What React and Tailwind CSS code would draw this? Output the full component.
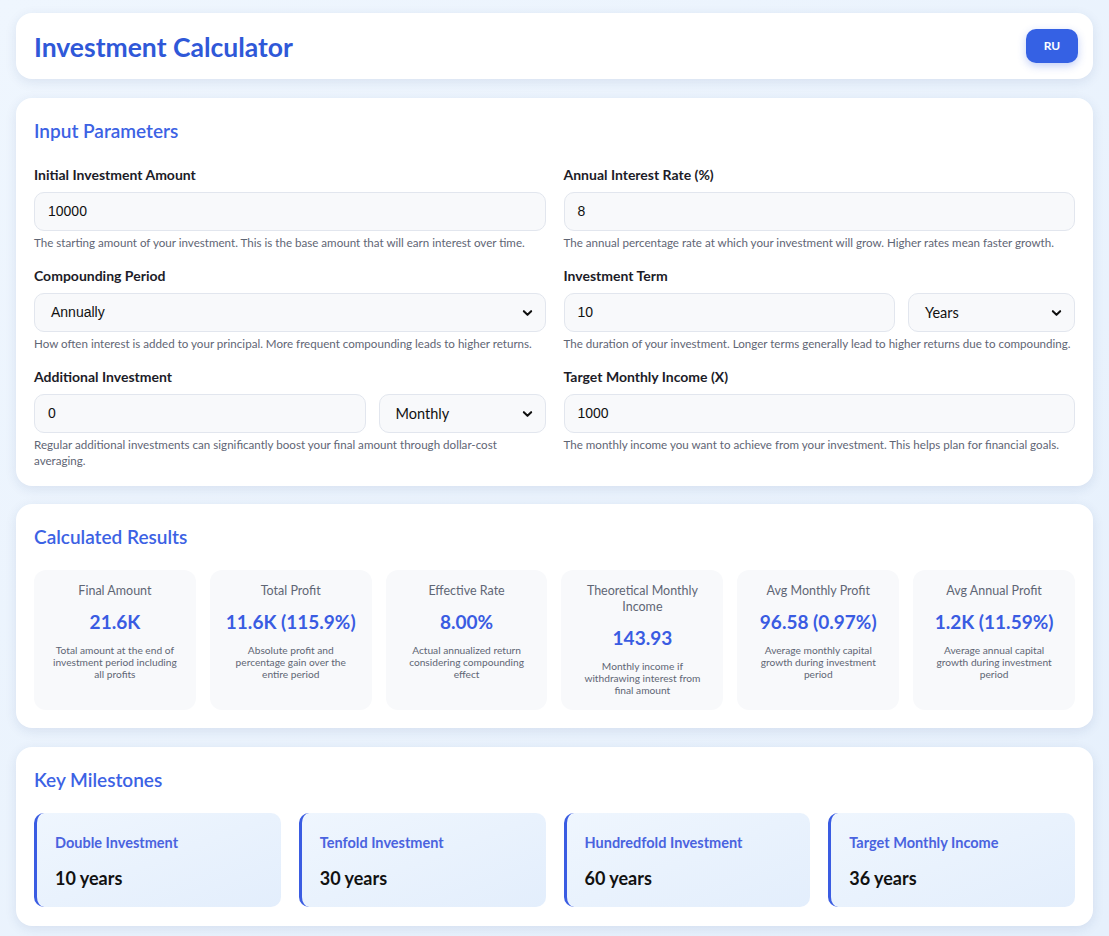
import React from "react";

const font = { fontFamily: 'Lato, "Noto Sans", sans-serif' };

function Chevron() {
  return (
    <svg className="pointer-events-none absolute right-[12px] top-1/2 -translate-y-1/2" width="11" height="11" viewBox="0 0 12 12">
      <path d="M2 4 L6 8 L10 4" fill="none" stroke="#111" strokeWidth="2.2" strokeLinecap="round" strokeLinejoin="round" />
    </svg>
  );
}

function Field({ label, help, children }) {
  return (
    <div className="flex flex-col">
      <div className="text-[14px] leading-[18px] font-bold text-[#1c1c28] mb-[8px]">{label}</div>
      {children}
      <div className="mt-[4px] text-[11.6px] leading-[16px] text-[#5f6675]">{help}</div>
    </div>
  );
}

function TextInput({ value, grow }) {
  return (
    <div className={"h-[39px] min-w-0 rounded-[10px] border border-[#e2e6ee] bg-[#f8f9fb] flex items-center px-[13px] text-[14px] text-[#111] " + (grow ? "flex-1" : "")} style={{ fontFamily: '"Liberation Sans", Arial, sans-serif' }}>
      {value}
    </div>
  );
}

function Select({ value, className = "", arial }) {
  return (
    <div className={"relative h-[39px] shrink-0 rounded-[10px] border border-[#e2e6ee] bg-[#f8f9fb] flex items-center px-[16px] text-[14.5px] text-[#111] " + className} style={arial ? { fontFamily: '"Liberation Sans", Arial, sans-serif', fontSize: "14px" } : undefined}>
      {value}
      <Chevron />
    </div>
  );
}

function Card({ children, className = "" }) {
  return (
    <div className={"bg-white rounded-[16px] shadow-[0_3px_12px_rgba(30,60,120,0.10)] " + className}>{children}</div>
  );
}

function Heading({ children }) {
  return <h2 className="text-[19px] leading-[26px] font-semibold text-[#3c62e4]">{children}</h2>;
}

const results = [
  ["Final Amount", "21.6K", "Total amount at the end of investment period including all profits"],
  ["Total Profit", "11.6K (115.9%)", "Absolute profit and percentage gain over the entire period"],
  ["Effective Rate", "8.00%", "Actual annualized return considering compounding effect"],
  ["Theoretical Monthly Income", "143.93", "Monthly income if withdrawing interest from final amount"],
  ["Avg Monthly Profit", "96.58 (0.97%)", "Average monthly capital growth during investment period"],
  ["Avg Annual Profit", "1.2K (11.59%)", "Average annual capital growth during investment period"],
];

const milestones = [
  ["Double Investment", "10 years"],
  ["Tenfold Investment", "30 years"],
  ["Hundredfold Investment", "60 years"],
  ["Target Monthly Income", "36 years"],
];

export default function App() {
  return (
    <div className="min-h-[936px] bg-gradient-to-br from-[#eff6fe] to-[#e6f0fc] px-[16px] pt-[13px] pb-[11px] flex flex-col gap-[18px]" style={font}>
      <Card className="px-[18px] py-[16px] mb-[1px] flex items-center justify-between">
        <h1 className="text-[26.5px] leading-[31px] pt-[3px] font-bold text-[#2f58d8]">Investment Calculator</h1>
        <button className="w-[52px] h-[34px] mr-[-3px] rounded-[10px] bg-[#3561e4] text-white text-[12px] font-bold shadow-[0_3px_8px_rgba(53,97,228,0.3)]">RU</button>
      </Card>

      <Card className="px-[18px] pt-[20px] pb-[17px]">
        <Heading>Input Parameters</Heading>
        <div className="mt-[22px] grid grid-cols-2 gap-x-[18px] gap-y-[16px]">
          <Field label="Initial Investment Amount" help="The starting amount of your investment. This is the base amount that will earn interest over time.">
            <TextInput value="10000" />
          </Field>
          <Field label="Annual Interest Rate (%)" help="The annual percentage rate at which your investment will grow. Higher rates mean faster growth.">
            <TextInput value="8" />
          </Field>
          <Field label="Compounding Period" help="How often interest is added to your principal. More frequent compounding leads to higher returns.">
            <Select value="Annually" arial />
          </Field>
          <Field label="Investment Term" help="The duration of your investment. Longer terms generally lead to higher returns due to compounding.">
            <div className="flex gap-[13px]">
              <TextInput value="10" grow />
              <Select value="Years" className="w-[167px]" />
            </div>
          </Field>
          <Field label="Additional Investment" help="Regular additional investments can significantly boost your final amount through dollar-cost averaging.">
            <div className="flex gap-[13px]">
              <TextInput value="0" grow />
              <Select value="Monthly" className="w-[167px]" />
            </div>
          </Field>
          <Field label="Target Monthly Income (X)" help="The monthly income you want to achieve from your investment. This helps plan for financial goals.">
            <TextInput value="1000" />
          </Field>
        </div>
      </Card>

      <Card className="px-[18px] pt-[20px] pb-[18px] mb-[1px]">
        <Heading>Calculated Results</Heading>
        <div className="mt-[20px] grid grid-cols-6 gap-[14px]">
          {results.map(([t, v, d]) => (
            <div key={t} className="rounded-[12px] bg-[#f8f9fb] px-[14px] pt-[13px] pb-[14px] text-center">
              <div className="text-[12.5px] leading-[16px] text-[#5f6675]">{t}</div>
              <div className="mt-[11px] text-[19px] leading-[24px] font-bold text-[#3a5ce2]">{v}</div>
              <div className="mt-[10px] px-[1px] text-[10.2px] leading-[12px] text-[#5f6675]">{d}</div>
            </div>
          ))}
        </div>
      </Card>

      <Card className="px-[18px] pt-[20px] pb-[19px]">
        <Heading>Key Milestones</Heading>
        <div className="mt-[20px] grid grid-cols-4 gap-[18px]">
          {milestones.map(([t, v]) => (
            <div key={t} className="rounded-[10px] border-l-[3px] border-[#3a5ce2] bg-gradient-to-br from-[#eff6fe] to-[#e3eefc] pl-[18px] pr-[14px] pt-[21px] pb-[17px]">
              <div className="text-[14.5px] leading-[18px] font-bold text-[#4a63df]">{t}</div>
              <div className="mt-[14px] text-[18px] leading-[24px] font-bold text-[#111]">{v}</div>
            </div>
          ))}
        </div>
      </Card>
    </div>
  );
}
